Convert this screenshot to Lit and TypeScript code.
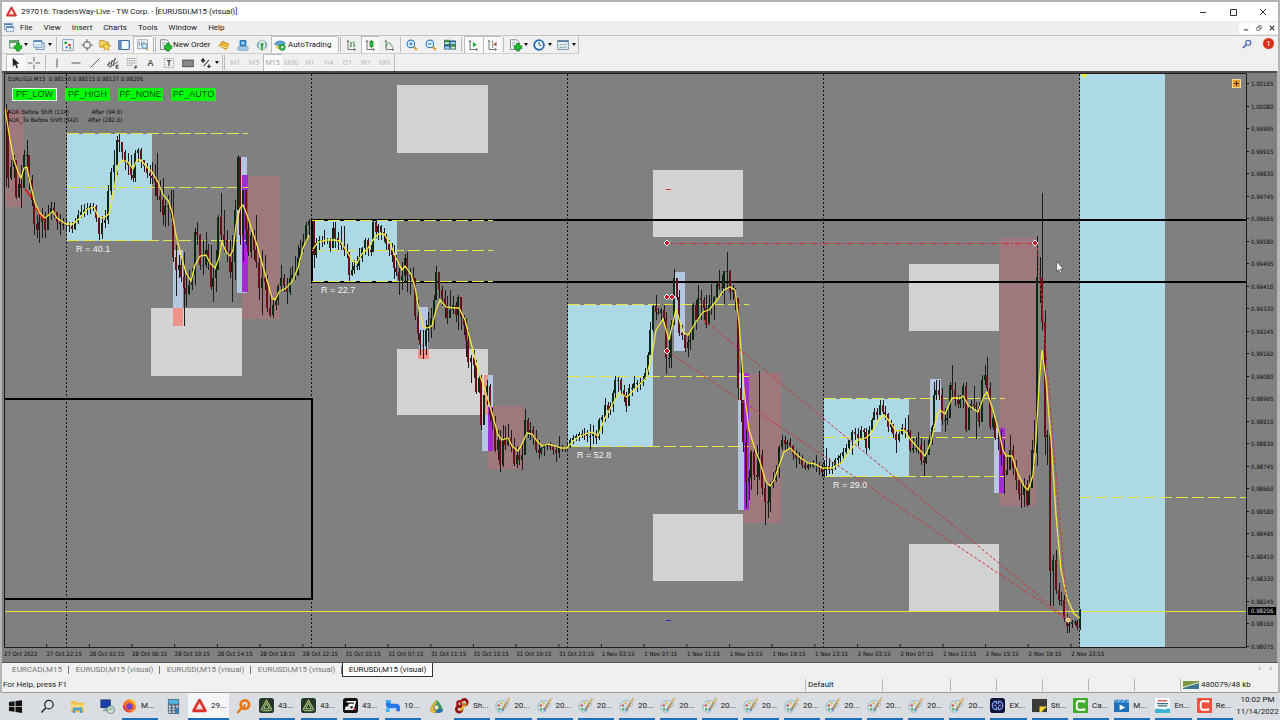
import { LitElement, html, css, svg } from "lit";
import { customElement, property, state } from "lit/decorators.js";
import { classMap } from "lit/directives/class-map.js";

/* Price series: x high close low, in chart units. Each bar opens at the previous close. */
const BARS = `
6 104 112 187;8 110 178 188;11 160 167 180;14 155 160 178;16 160 197 199;19 178 184 198;21 165 188 208;24 150 155 185;27 140 155 172;29 155 180 190;32 175 200 206;34 198 224 235;37 215 230 238;39 210 222 243;42 208 215 238;45 212 230 238;48 205 215 228;51 202 208 220;54 202 212 218;57 214 222 230;60 214 224 235;63 218 224 230;66 220 225 232;69 222 226 232;72 222 229 233;75 218 222 230;78 210 215 224;81 205 212 218;84 204 210 217;87 203 208 215;90 203 206 214;93 203 207 211;96 205 218 222;99 216 234 240;102 216 223 239;105 210 220 228;108 185 191 224;111 168 172 195;114 150 165 190;117 136 140 175;119 134 142 152;122 142 152 160;125 150 162 170;128 153 165 175;131 155 175 180;133 168 178 182;135 150 153 182;138 148 150 162;141 148 160 168;144 160 166 172;147 163 173 178;150 165 176 184;152 162 178 184;155 164 182 196;157 153 196 200;160 180 200 212;163 178 215 225;165 200 206 227;168 195 206 226;171 190 213 218;173 190 257 262;176 245 270 296;179 255 265 278;181 255 277 282;184 252 288 326;186 275 294 307;189 270 285 295;192 268 275 290;195 228 232 285;197 222 235 245;200 234 265 270;203 240 265 275;206 232 250 268;208 244 262 270;211 245 287 290;213 265 278 302;216 250 270 292;218 215 217 260;221 193 235 240;224 210 240 252;227 230 250 262;230 240 272 278;232 235 262 302;235 200 210 280;238 155 157 200;240 158 235 245;243 190 190 262;246 190 230 245;248 220 252 256;251 232 235 258;254 230 250 260;256 215 262 268;259 258 288 300;262 250 278 315;265 255 282 290;267 275 308 312;270 292 315 317;273 300 305 318;276 295 300 310;278 284 286 305;281 265 278 292;284 274 286 292;287 278 292 304;290 268 278 295;292 266 275 282;295 256 275 280;298 245 258 276;300 240 248 262;303 234 242 252;306 222 225 238;309 219 221 235;
314 248 255 268;316 238 243 258;319 236 240 250;322 236 241 247;324 230 240 245;327 238 240 244;330 238 248 252;333 222 228 248;335 222 238 248;338 232 242 250;341 226 245 250;344 226 250 256;347 244 252 258;349 252 275 281;352 262 270 276;354 260 266 274;357 256 266 270;359 248 258 270;362 247 248 262;365 238 240 255;368 238 250 256;371 245 252 256;373 220 222 250;376 220 232 238;378 224 226 240;381 225 232 240;384 228 235 242;386 234 244 250;389 240 250 256;392 243 255 262;394 245 268 279;396 255 272 276;399 268 280 295;402 262 276 290;405 254 258 282;407 252 275 292;410 268 276 295;413 267 278 285;415 278 316 320;418 300 333 340;420 330 345 355;423 330 346 359;426 320 330 355;428 312 325 342;431 308 318 338;434 295 300 330;436 266 272 300;439 272 290 298;442 286 298 306;445 290 305 318;447 296 318 324;450 290 310 318;453 296 305 314;456 302 315 322;458 295 297 330;461 297 317 330;464 315 325 335;466 318 340 357;468 330 362 368;471 355 358 383;474 350 365 378;476 360 392 394;479 375 378 393;481 375 425 430;484 395 395 425;487 380 386 405;490 384 415 422;492 408 420 430;495 416 450 452;498 430 440 460;500 430 465 472;503 425 440 467;505 426 445 450;508 424 438 446;511 430 447 452;514 438 464 466;517 446 455 468;519 450 460 465;522 442 455 470;525 409 420 455;528 418 432 438;530 422 430 440;533 426 437 445;536 430 450 453;539 440 453 459;541 447 448 455;544 444 446 456;547 443 445 450;550 442 447 450;553 444 450 455;556 446 453 462;559 436 448 458;562 445 449 452;565 447 448 452;567 442 447 452;
570 438 440 448;573 435 438 444;576 434 436 441;579 432 434 441;582 430 434 438;584 428 434 440;587 430 436 442;590 424 436 450;593 425 434 444;596 430 438 444;599 418 420 440;602 415 417 434;605 398 405 422;608 402 410 418;610 402 406 415;613 390 393 412;615 376 380 400;618 377 380 392;621 378 390 395;624 385 395 402;626 392 406 412;629 384 388 406;632 384 388 396;634 376 383 390;637 380 383 392;640 378 383 390;643 376 380 386;645 368 373 380;648 352 355 375;650 322 330 355;653 305 306 332;656 295 312 320;658 308 313 315;661 308 310 322;664 305 318 322;666 312 358 374;669 340 358 368;671 320 325 368;674 269 278 325;677 278 297 300;679 290 333 336;682 325 335 340;685 333 348 352;688 335 342 357;690 330 340 350;693 303 305 340;696 300 320 330;698 285 298 310;701 290 300 320;704 297 308 320;706 295 325 328;709 295 305 325;711 284 305 315;714 296 297 320;717 282 284 300;719 270 287 290;722 275 288 295;724 271 271 304;727 252 271 288;730 270 292 300;733 285 290 300;735 288 298 310;738 298 388 400;741 355 400 422;743 400 442 452;746 430 482 508;749 470 478 500;751 450 452 490;754 448 475 480;757 445 477 495;759 371 455 480;762 450 488 495;765 480 502 525;768 485 502 518;770 482 485 512;773 472 480 488;776 465 470 482;779 445 447 478;782 435 440 450;785 436 444 450;787 440 442 450;790 438 446 450;793 445 454 460;796 450 458 468;799 452 458 464;802 455 465 468;805 460 468 470;808 462 465 470;810 462 466 468;813 460 464 468;816 455 465 472;819 462 468 475;822 464 472 477;824 460 470 477;
826 448 466 476;829 458 470 474;832 462 467 474;835 458 460 470;838 455 458 466;840 453 456 464;843 448 452 460;846 444 448 455;849 440 440 450;852 430 432 455;855 428 434 440;858 428 438 446;861 426 430 440;864 428 432 440;866 428 448 454;869 426 430 450;872 418 420 432;874 408 412 420;877 408 415 420;880 400 405 412;883 400 412 416;885 406 414 420;888 413 427 432;891 420 424 432;893 424 434 438;896 430 440 453;899 430 434 442;902 424 428 435;905 418 430 438;908 415 432 436;910 430 450 452;913 438 448 453;916 437 448 452;918 432 445 454;921 438 460 465;924 440 463 476;926 450 455 464;929 436 440 455;932 425 427 445;934 382 395 430;936 380 390 400;939 380 395 400;942 388 420 425;945 408 420 432;947 410 418 425;950 382 385 410;952 365 390 398;955 382 400 406;958 395 404 408;960 395 400 408;963 383 386 408;966 382 430 432;969 405 408 430;971 400 404 410;974 386 406 410;976 402 407 439;979 402 422 427;982 375 380 422;985 365 375 385;987 357 388 392;990 382 427 430;993 410 418 430;995 418 438 440;998 428 438 450;1001 430 455 465;1004 440 475 494;1007 455 470 475;1010 435 450 470;1013 445 468 475;1016 460 480 490;1019 480 494 500;1021 480 495 508;1024 478 485 507;1027 480 505 507;1029 475 488 505;1032 440 450 488;1034 420 453 466;1037 236 277 466;1040 257 278 303;1042 193 322 330;1045 310 437 455;1047 430 435 465;1050 430 571 606;1053 555 560 606;1056 550 590 594;1059 583 600 605;1061 592 600 606;1064 595 618 622;1067 612 626 633;1069 617 624 633;1072 620 622 628;1075 620 622 625;1077 620 627 630;1080 609 611 630`;

const AVERAGE = [
  "5,108 10,140 14,160 18,172 21,178 24,168 27,167 30,182 35,203 40,213 45,218 50,214 53,211 57,218 66,224 73,224 80,218 87,209 94,207 98,216 103,218 109,214 113,195 118,165 122,160 128,162 133,169 137,160 141,160 145,165 152,172 158,182 163,195 168,200 172,212 176,235 181,255 186,273 191,281 195,265 200,256 206,255 210,263 215,268 219,258 222,242 226,252 230,256 233,250 236,225 240,208 243,205 247,215 252,230 257,245 262,263 267,280 272,298 275,300 279,292 286,288 292,282 298,268 303,248 309,235",
  "313,249 318,242 327,240 334,240 340,241 346,250 352,260 357,263 362,254 368,248 373,240 378,234 384,234 390,243 396,258 402,270 405,266 411,274 415,287 419,310 423,326 427,328 432,326 436,310 440,300 446,307 454,308 459,308 465,320 471,343 478,370 485,390 492,413 498,435 502,440 508,438 512,446 518,451 522,444 527,433 532,434 537,441 542,446 548,444 556,446 561,448 567,448 573,441 580,436 592,432 598,436 604,420 612,405 619,393 627,397 636,388 646,378 652,355 656,330 663,319 669,340 676,309 683,332 688,335 696,322 703,312 709,310 717,300 724,290 730,287 735,290 739,322 744,390 749,430 755,449 760,462 766,482 770,486 774,480 779,466 784,452 790,448 796,454 802,459 808,463 815,464 822,468 832,468 842,462 850,450 858,440 866,438 872,432 878,420 884,415 890,422 896,431 904,430 911,440 918,448 925,456 931,442 937,415 940,410 945,414 952,398 960,398 963,396 968,405 978,412 984,396 987,392 993,410 999,432 1003,450 1006,456 1012,456 1018,474 1024,486 1028,490 1033,475 1036,440 1039,385 1042,350 1046,380 1051,440 1056,515 1061,570 1067,598 1074,614 1080,618",
];

const PRICES = ["1.00165","1.00080","0.99995","0.99915","0.99830","0.99745","0.99665","0.99580","0.99495","0.99410","0.99330","0.99245","0.99160","0.99080","0.98995","0.98910","0.98830","0.98745","0.98660","0.98580","0.98495","0.98410","0.98330","0.98245","0.98160","0.98075"];
const TIMES = ["27 Oct 2022","27 Oct 22:15","28 Oct 02:15","28 Oct 06:15","28 Oct 10:15","28 Oct 14:15","28 Oct 18:15","28 Oct 22:15","31 Oct 03:15","31 Oct 07:15","31 Oct 11:15","31 Oct 15:15","31 Oct 19:15","31 Oct 23:15","1 Nov 03:15","1 Nov 07:15","1 Nov 11:15","1 Nov 15:15","1 Nov 19:15","1 Nov 23:15","2 Nov 03:15","2 Nov 07:15","2 Nov 11:15","2 Nov 15:15","2 Nov 19:15","2 Nov 23:15"];

/* x, y, width, height, class */
const ZONES: [number, number, number, number, string][] = [
  [397,85,91,68,"grey"],[151,308,91,68,"grey"],[397,349,91,66,"grey"],[653,170,90,67,"grey"],[653,514,90,67,"grey"],[909,264,90,67,"grey"],[909,544,90,67,"grey"],
  [67,134,85,107,"sky"],[312,221,85,61,"sky"],[568,305,85,142,"sky"],[824,399,85,78,"sky"],[1080,74,85,574,"sky"],
  [5,110,19,97,"pink"],[242,176,38,143,"pink"],[488,406,36,63,"pink"],[743,373,38,150,"pink"],[1000,238,36,268,"pink"],
  [173,250,10,58,"mist"],[173,308,10,18,"salmon"],[237,157,10,136,"mist"],[242,175,6,117,"violet"],
  [419,307,9,42,"mist"],[418,349,11,10,"salmon"],[482,415,6,36,"mist"],[488,375,5,32,"mist"],[484,375,4,40,"salmon"],[488,407,5,44,"violet"],
  [674,272,11,79,"mist"],[738,373,6,137,"mist"],[744,373,5,137,"violet"],[930,379,11,53,"mist"],[994,428,6,65,"mist"],[999,428,6,65,"violet"],
];
const LEVELS: [number, number, number][] = [
  [67,248,133],[67,248,187],[67,248,240],[312,493,220],[312,493,250],[312,493,281],
  [568,749,304],[568,749,376],[568,749,446],[824,1005,398],[824,1005,437],[824,1005,476],[1080,1247,497],
];
const HANDLES = [[667,243],[667,297],[672,297],[667,351],[1035,243]];
const RANGES: [number, number, string][] = [[76,252,"R = 40.1"],[321,293,"R = 22.7"],[577,458,"R = 52.8"],[833,488,"R = 29.0"]];

const axes = svg`<path d="M4 2v12h10M2.500 4L4 2l1.500 2M12 12.500l2 1.500-2 1.500" fill="none" stroke="#666" stroke-width="1.200"/>`;
const sheet = svg`<path d="M2 1h8l3 3v10H2z" fill="#f4f7fa" stroke="#667"/><path d="M4 5h5M4 8h4" stroke="#899"/>`;
const plus = svg`<path d="M10 6h4v3h3v4h-3v3h-4v-3H7V9h3z" fill="#1fbe2b" stroke="#0a7f18"/>`;
const lens = svg`<path d="M9.500 9.500l5 5" stroke="#d8a93b" stroke-width="3"/><circle cx="6.500" cy="6.500" r="5" fill="#dff0fc" stroke="#2f7fc6" stroke-width="1.500"/>`;
const tw = svg`<path d="M8 2.500L14.200 13.500H1.800z" fill="none" stroke="#d8332f" stroke-width="3.200" stroke-linejoin="round"/><path d="M8 5l3.600 6.800H4.400zM5.500 8.500l5 3.300" fill="none" stroke="#f3b0ac" stroke-width=".7"/>`;
const mt = svg`<rect width="16" height="16" rx="3" fill="#24392c"/><path d="M8 2.500l5.500 9.500-2 1.500h-7L2.500 12z" fill="none" stroke="#9fb46b" stroke-width="1.400"/><path d="M8 5.500l3 6H5z" fill="none" stroke="#c4d68c"/>`;

const ICONS: Record<string, unknown> = {
  tw,
  newchart: svg`<rect x="1" y="2" width="12" height="10" fill="#eef6ee" stroke="#3b7d47"/><path d="M1 4h12" stroke="#3b7d47" stroke-width="2"/>${plus}`,
  profiles: svg`<path d="M4 5h11v9H4z" fill="#dce8f6" stroke="#5480ae"/><path d="M1 2h11v9H1z" fill="#eef5fd" stroke="#5480ae"/><path d="M1 3h11" stroke="#5480ae" stroke-width="2"/><path d="M3 8h7" stroke="#91adc9"/>`,
  market: svg`<rect x="1" y="1" width="14" height="14" fill="#fbfcff" stroke="#5f83b4"/><circle cx="5" cy="5" r="2" fill="#2ba94a"/><circle cx="10" cy="8" r="2" fill="#d74c3c"/><circle cx="6" cy="11" r="1.500" fill="#3771c8"/><circle cx="11" cy="12" r="1.500" fill="#2ba94a"/>`,
  target: svg`<circle cx="8" cy="8" r="4.500" fill="none" stroke="#777" stroke-width="1.500"/><path d="M8 0v5M8 11v5M0 8h5M11 8h5" stroke="#777" stroke-width="1.500"/>`,
  star: svg`<path d="M1 2h6l1 2h5v7H1z" fill="#f4d264" stroke="#b48a25"/><path d="M10 5l1.600 3.300 3.700.4-2.700 2.500.7 3.700L10 13l-3.300 1.900.7-3.700L4.700 8.700l3.700-.4z" fill="#ffe24d" stroke="#b8861a"/>`,
  terminal: svg`<rect x="1" y="2" width="14" height="12" rx="1" fill="#f4f9ff" stroke="#39679d" stroke-width="1.500"/><path d="M1 2h4v12H1z" fill="#5f8fc6"/>`,
  tester: svg`<rect x="1" y="1" width="13" height="12" fill="#eef2f6" stroke="#8593a3"/><path d="M3 9V4M6 9V3M9 8V4" stroke="#5a6d80"/><circle cx="10" cy="9" r="3.500" fill="#cfe6f8" stroke="#3a78b5"/><path d="M12 12l3 3" stroke="#c79b3a" stroke-width="2"/>`,
  order: svg`${sheet}${plus}`,
  gold: svg`<path d="M1 9l5-6 9 4-4 7z" fill="#e9b53a" stroke="#a67a16"/><path d="M1 9l10 3 4-5" fill="none" stroke="#fff0b0"/>`,
  user: svg`<rect x="1" y="10" width="14" height="5" rx="2" fill="#a9c8e2" stroke="#6d97bc"/><path d="M4 9V2h8v7z" fill="#3b8bd0" stroke="#276aa7"/><path d="M6 4h4v3H6z" fill="#a8d8f4"/>`,
  signal: svg`<circle cx="8" cy="8" r="6.500" fill="#d8e6e4" stroke="#8fb4b3"/><path d="M4 12a6 6 0 010-8M12 12a6 6 0 000-8" fill="none" stroke="#6d9bb0" stroke-width="1.500"/><path d="M8 7v8" stroke="#35a443" stroke-width="2.500"/><circle cx="8" cy="7" r="2" fill="#35a443"/>`,
  auto: svg`<path d="M1 7c2-5 11-6 14-1l-7 4z" fill="#5da0d6" stroke="#2c6ea5"/><path d="M3 8l6 3v4L3 12z" fill="#f0c840"/><circle cx="11" cy="11" r="4.500" fill="#22a83a"/><path d="M9.800 8.800v4.400l3.500-2.200z" fill="#fff"/>`,
  bars: svg`${axes}<path d="M8 4v7M6.500 9H8M8 5h2M12 3v8M12 9h1.500" stroke="#2b7d38" fill="none" stroke-width="1.200"/>`,
  candles: svg`${axes}<path d="M10 1v12" stroke="#177a25"/><rect x="8" y="3" width="4" height="7" fill="#2bc13c" stroke="#177a25"/>`,
  line: svg`${axes}<path d="M4 11c2-7 5-7 6-4s3 3 4 4" fill="none" stroke="#2b8d38" stroke-width="1.200"/>`,
  zin: svg`${lens}<path d="M4 6.500h5M6.500 4v5" stroke="#2f7fc6" stroke-width="1.300"/>`,
  zout: svg`${lens}<path d="M4 6.500h5" stroke="#2f7fc6" stroke-width="1.300"/>`,
  tile: svg`<path d="M0 2h16v12H0z" fill="#2a5f96"/><path d="M1 4h6v3H1zM9 10h6v3H9z" fill="#bfe49a"/><path d="M9 4h6v3H9zM1 10h6v3H1z" fill="#a8d0f0"/><path d="M0 2h8M8 8h8" stroke="#3d9b3b" stroke-width="2"/>`,
  scroll: svg`${axes}<path d="M8 4v7l5-3.500z" fill="#22a836"/>`,
  shift: svg`${axes}<path d="M9 2v10" stroke="#555"/><path d="M14 4v6L10 7z" fill="#b5402f"/>`,
  indic: svg`${sheet}${plus}`,
  clock: svg`<circle cx="8" cy="8" r="6.500" fill="#e8f4ff" stroke="#2a6db6" stroke-width="2.500"/><path d="M8 4v4l3 1" fill="none" stroke="#2a5f96" stroke-width="1.300"/>`,
  template: svg`<rect x="1" y="2" width="14" height="12" fill="#e9f1f8" stroke="#5b7fa3"/><path d="M1 3h14" stroke="#5b7fa3" stroke-width="2"/><path d="M3 9l3-2 3 1 4-2M3 12l3-1 3 1 4-2" fill="none" stroke="#6d9080"/>`,
  arrowc: svg`<path d="M5 1v12l3-3 2 5 2-1-2-5h4z" fill="#222"/>`,
  cross: svg`<path d="M8 0v6M8 10v6M0 8h6M10 8h6" stroke="#555" stroke-width="1.200"/>`,
  vline: svg`<path d="M8 2v12" stroke="#555" stroke-width="1.300"/>`,
  hline: svg`<path d="M2 8h12" stroke="#555" stroke-width="1.300"/>`,
  trend: svg`<path d="M2 14L14 2" stroke="#555" stroke-width="1.300"/>`,
  channel: svg`<path d="M0 11L12 3M3 14l12-8M3 6l-1 7M7 4L5 13M11 1L8 12" stroke="#444" stroke-width="1.200"/><path d="M15.500 11H12v4h3.500M12 13h3" fill="none" stroke="#222"/>`,
  fibo: svg`<path d="M1 2h13M1 5h13M1 8h13M1 11h9" stroke="#777" stroke-dasharray="2 1"/><path d="M12 16v-4h3M12 14h2.500" fill="none" stroke="#222"/>`,
  label: svg`<rect x="2" y="2" width="12" height="12" fill="none" stroke="#777" stroke-dasharray="1.500 1.500"/><path d="M5 5h6M8 5v7" stroke="#333" stroke-width="1.500"/>`,
  rect: svg`<rect x="1" y="4" width="14" height="9" fill="#888" stroke="#333"/>`,
  arrows: svg`<path d="M1 5l3-4 3 4-3 3z" fill="#333"/><path d="M12 4L5 12" stroke="#333" stroke-width="1.500"/><path d="M9 12l3 3 3-3h-2v-2h-2v2z" fill="#333"/>`,
  search: svg`<path d="M1.500 14.500l5-5" stroke="#3b57b5" stroke-width="2.500"/><circle cx="10" cy="6" r="4" fill="#eef3ff" stroke="#3b57b5" stroke-width="1.800"/>`,
  win: svg`<path d="M1 3.300l6-.9v5.200H1zM8 2.200l7-1v6.400H8zM1 8.500h6v5.200l-6-.9zM8 8.500h7v6.400l-7-1z" fill="#111"/>`,
  find: svg`<circle cx="9.500" cy="6" r="4.500" fill="none" stroke="#222" stroke-width="1.300"/><path d="M6 9.500L1.500 14.500" stroke="#222" stroke-width="1.500"/>`,
  folder: svg`<path d="M1 2h5l2 2h7v10H1z" fill="#f2c14b"/><path d="M1 6h14v5H1z" fill="#fbdc7c"/><path d="M3 9h10v6h-2.500v-3h-5v3H3z" fill="#4a9bd1"/>`,
  remote: svg`<rect x="1" y="1" width="10" height="8" fill="#1c3fae" stroke="#27336b"/><path d="M4 10h6v3H3z" fill="#8aa"/><circle cx="11.500" cy="11.500" r="4" fill="#d7e3da" stroke="#6d8c7d"/><path d="M9.500 12l2-2 2 2" fill="none" stroke="#3a8a4a"/>`,
  firefox: svg`<circle cx="8" cy="8.500" r="7" fill="#ff7a1c"/><path d="M8 1c5 0 8 4 7 8-1-2-3-3-4-5-1 0-3-1-3-3z" fill="#ffc93a"/><path d="M1 8a7 7 0 0010 6.500C6 15 3 12 3 8z" fill="#e3265d"/><circle cx="8" cy="9" r="3.500" fill="#7b3fc4"/>`,
  calc: svg`<rect x="2" y="0" width="12" height="16" fill="#5b6f80"/><rect x="3" y="1" width="10" height="4" fill="#4fb8e8"/><path d="M3 7h2v2H3zM7 7h2v2H7zM11 7h2v2h-2zM3 10h2v2H3zM7 10h2v2H7zM3 13h2v2H3zM7 13h2v2H7z" fill="#dfe8ee"/><path d="M11 10h2v5h-2z" fill="#2f86c5"/>`,
  tool: svg`<circle cx="9.500" cy="6" r="4.500" fill="none" stroke="#e67817" stroke-width="3"/><path d="M6 9.500L1.500 15M10 6L7 10" stroke="#e67817" stroke-width="2.500"/>`,
  mt,
  sierra: svg`<rect width="16" height="16" rx="3" fill="#111"/><path d="M4 4h9l-1 3H7l-.5 1H12l-1.500 4H3l.7-2H8" fill="none" stroke="#fff" stroke-width="1.700"/><path d="M11 12h3" stroke="#e33" stroke-width="1.500"/>`,
  blue: svg`<path d="M1 2h5v4h6c3 0 4 2 4 4v4h-4v-3H5C2 11 1 9 1 7z" fill="#2577ee"/><path d="M1 11h4v4H1zM1 2h5v3H1z" fill="#35b7f5"/>`,
  mt5: svg`<path d="M8 1c3 2 6 7 7 11-2 4-12 4-14 0C2 8 5 3 8 1z" fill="#3c9a65"/><path d="M8 1C5 3 2 8 1 12c2 3 4 3 6 3z" fill="#e5b53c"/><path d="M9 9l6 3c-1 3-5 3-8 3z" fill="#2b72b8"/><circle cx="8" cy="9" r="2.800" fill="#f6f3c2" stroke="#32705b"/>`,
  share: svg`<g fill="none"><circle cx="11" cy="4.500" r="3" stroke="#8f1515" stroke-width="3"/><circle cx="6" cy="6" r="2.500" stroke="#a01818" stroke-width="2.500"/><circle cx="5.500" cy="12" r="3" stroke="#8f1515" stroke-width="3"/><path d="M13 5C12 9 9 12 7 14M8 4c3 2 2 6-2 9" stroke="#f4c02f" stroke-width="1.300"/></g>`,
  paint: svg`<path d="M1 9C1 4 6 2 10 3s5 3 4 5-3 1-4 3 0 4-4 4-5-3-5-6z" fill="#cfe3ea" stroke="#8fb0bd"/><circle cx="4" cy="8" r="1.300" fill="#d9534b"/><circle cx="7" cy="5.500" r="1.300" fill="#eab84b"/><circle cx="4.500" cy="12" r="1.300" fill="#4fae5b"/><circle cx="8" cy="12.500" r="1.200" fill="#3a7fd0"/><path d="M15 1L8 12" stroke="#b98a4e" stroke-width="2"/><path d="M15.500 0L12 5" stroke="#d8bd8e" stroke-width="2.500"/>`,
  exness: svg`<rect width="16" height="16" rx="3" fill="#0e1233"/><path d="M7 3.500a4.500 4.500 0 000 9M9 3.500a4.500 4.500 0 010 9M4.500 8H7M9 8h2.500M7 3.500v3M9 9.500v3M7 9.500v3M9 3.500v3" fill="none" stroke="#7f9bf0" stroke-width="1.500"/>`,
  sticky: svg`<path d="M0 1h16v14H0z" fill="#3a3a3a"/><path d="M8 9h8l-6 6H8z" fill="#fbd436"/>`,
  camt: svg`<rect width="16" height="16" rx="1" fill="#3fae2a"/><path d="M12 5V3.500H6a2 2 0 00-2 2v5a2 2 0 002 2h6V11" fill="none" stroke="#fff" stroke-width="2"/>`,
  movies: svg`<path d="M0 2h16v13H0z" fill="#1d6fb8"/><path d="M0 2h16v3H0z" fill="#63b3ec"/><path d="M1 5l3-3M6 5l3-3M11 5l3-3" stroke="#14497c"/><path d="M6 7v6l6-3z" fill="#fff"/>`,
  envelopes: svg`<path d="M0 0h16v16H0z" fill="#f8fbfc"/><path d="M3 3h10" stroke="#d55" stroke-width="1.500"/><path d="M2 6h12M3 8.500h10" stroke="#36707c" stroke-width="1.300"/><path d="M0 12c5-2 9 2 16-1v5H0z" fill="#3bb3cf"/>`,
  rec: svg`<rect width="16" height="16" rx="1" fill="#f0503c"/><path d="M12 5V3.500H6a2 2 0 00-2 2v5a2 2 0 002 2h6V11" fill="none" stroke="#fff" stroke-width="2"/>`,
  chartwin: svg`<rect x="1" y="1" width="12" height="9" fill="#d7e7f6" stroke="#4e80b6"/><rect x="4" y="6" width="11" height="8" fill="#f3f8fd" stroke="#4e80b6"/><path d="M1 2h12M4 7h11" stroke="#4e80b6" stroke-width="2"/>`,
};

@customElement("ui-icon")
class UiIcon extends LitElement {
  @property() name = "";
  static styles = css`
    :host { display: inline-flex; flex: none; width: 12px; height: 12px; }
    svg { width: 100%; height: 100%; overflow: visible; }
  `;
  render() {
    return html`<svg viewBox="0 0 16 16" aria-hidden="true">${ICONS[this.name]}</svg>`;
  }
}

@customElement("price-chart")
class PriceChart extends LitElement {
  @state() private mode = "PF_LOW";

  static styles = css`
    :host { display: grid; grid-template-columns: minmax(0, 1fr) 30px; grid-template-rows: minmax(0, 1fr) 14px; background: #808080; border-top: 2px solid #4b4b4b; padding-left: 2px; box-sizing: border-box; font: 6px/8px "DejaVu Sans Condensed", "DejaVu Sans", sans-serif; color: #0a0a0a; }
    .plot { position: relative; min-height: 0; overflow: hidden; }
    .plot svg.canvas { position: absolute; inset: 0; width: 100%; height: 100%; display: block; }
    .prices { display: flex; flex-direction: column; justify-content: space-between; padding-top: 7px; margin-bottom: -3px; position: relative; }
    .prices span::before { content: ""; display: inline-block; width: 2px; height: 1px; background: #111; vertical-align: 2px; margin-right: 2px; }
    .now { position: absolute; left: 1px; right: 1px; top: 534px; background: #000; color: #ddd; padding-left: 3px; }
    .times { display: grid; grid-template-columns: repeat(29, minmax(0, 1fr)); margin-right: 5px; padding-top: 2px; }
    .times span { white-space: nowrap; }
    .overlay { position: absolute; left: 4px; top: 2px; display: flex; flex-direction: column; }
    .ohlc { white-space: pre; }
    .modes { display: flex; gap: 8px; padding: 5px 4px 7px; }
    .modes button { width: 45px; height: 13px; padding: 0; border: 1px solid #14f014; background: #00ff08; color: #045004; font: 9px/11px "Liberation Sans", Arial, sans-serif; }
    .modes button.on { border-color: #e8ffe8; }
    .adr { display: grid; grid-template-columns: 80px auto; white-space: nowrap; }
    .trade { position: absolute; right: 6px; top: 6px; width: 9px; height: 9px; padding: 0; border: 1px solid #f6d596; background: #ef9c1c; display: grid; place-items: center; }
    .trade svg { width: 5px; height: 5px; }
    .grey { fill: #d3d3d3; } .sky { fill: #add8e6; } .pink { fill: #9f787e; } .mist { fill: #b4c6e0; } .salmon { fill: #ee9488; } .violet { fill: #a22bd2; }
    .day { stroke: #111; stroke-dasharray: 2 2; }
    .level { stroke: #e6e64a; stroke-dasharray: 12 4; }
    .solid { stroke: #000; stroke-width: 2; fill: none; }
    .bid { stroke: #e2e23a; }
    .wick { stroke: #1b1b1b; fill: none; }
    .up { stroke: #0b2a12; stroke-width: 2; fill: none; }
    .down { stroke: #6a0f18; stroke-width: 2; fill: none; }
    .avg { stroke: #f2e83c; fill: none; stroke-width: 1.300; }
    .signal { stroke: #e01818; fill: none; stroke-width: 2; }
    .link { stroke: #cf3038; fill: none; stroke-dasharray: 3 2; }
    .long { stroke-dasharray: 6 2 2 2; }
    .knob { fill: #d01020; stroke: #fff; }
    .range { fill: #f2f2f2; font: 9px "Liberation Sans", Arial, sans-serif; }
  `;

  private bars() {
    let wick = "", up = "", down = "";
    let open = 108;
    for (const row of BARS.trim().split(";")) {
      const [x, hi, close, lo] = row.trim().split(" ").map(Number);
      if (!x) continue;
      wick += `M${x + 0.5} ${hi}V${lo}`;
      const seg = `M${x} ${Math.min(open, close)}V${Math.max(open, close, Math.min(open, close) + 1)}`;
      if (close <= open) up += seg; else down += seg;
      open = close;
    }
    return svg`<path class="wick" d=${wick}/><path class="up" d=${up}/><path class="down" d=${down}/>`;
  }

  render() {
    const ticks = TIMES.map((_, i) => `M${(4 + i * 42.68).toFixed(1)} 644v3`).join("");
    return html`
      <div class="plot">
        <svg class="canvas" viewBox="4 73 1243 575" preserveAspectRatio="xMinYMin meet" role="img" aria-label="EURUSDi M15 price chart">
          ${ZONES.map(([x, y, w, h, c]) => svg`<rect class=${c} x=${x} y=${y} width=${w} height=${h}/>`)}
          ${[66.5, 311.5, 567.5, 823.5, 1079.5].map((x) => svg`<path class="day" d="M${x} 74V647"/>`)}
          <path class="solid" d="M4 399H312V599H4M312 220H1247M312 282H1247M312 220V282"/>
          ${LEVELS.map(([a, b, y]) => svg`<path class="level" d="M${a} ${y + 0.5}H${b}"/>`)}
          <path class="bid" d="M4 611.500H1247"/>
          ${this.bars()}
          <path class="signal" d="M25 189L31 197M36 208L44 220"/>
          ${AVERAGE.map((p) => svg`<polyline class="avg" points=${p}/>`)}
          <path class="link long" d="M667 243.500H1035"/>
          <path class="link" d="M704 320L1068 620M667 351L1068 620M1037 243L1068 620"/>
          <path d="M666 189.500h5" stroke="#e03030"/><path d="M666 620.500h5" stroke="#2828c8"/>
          ${HANDLES.map(([x, y]) => svg`<path class="knob" d="M${x} ${y - 3}l3 3-3 3-3-3z"/>`)}
          <circle cx="1068" cy="620" r="2" fill="#f7b04a" stroke="#fce3bc"/>
          <path d="M1081 74h6l-3 4z" fill="#f2f200"/>
          ${RANGES.map(([x, y, t]) => svg`<text class="range" x=${x} y=${y}>${t}</text>`)}
          <path d="M1056.500 261.500v10l2.300-2 1.600 3.500 1.500-.7-1.500-3.300h3z" fill="#fff" stroke="#333" stroke-width=".6"/>
          <path d="M4.500 647.500V73.500H1246.500V647.500z${ticks}" fill="none" stroke="#1c1c1c"/>
        </svg>
        <div class="overlay">
          <span class="ohlc">EURUSDi,M15  0.98150 0.98215 0.98137 0.98206</span>
          <div class="modes">
            ${["PF_LOW", "PF_HIGH", "PF_NONE", "PF_AUTO"].map((m) => html`<button class=${classMap({ on: this.mode === m })} @click=${() => (this.mode = m)}>${m}</button>`)}
          </div>
          <div class="adr"><span>ADR Before Shift (114)</span><span>&nbsp; After (94.0)</span><span>ADR_3x Before Shift (342)</span><span>After (282.0)</span></div>
        </div>
        <button class="trade" aria-label="Open trade panel"><svg viewBox="0 0 5 5"><path d="M0 2.500h5M2.500 0v5" stroke="#402000"/></svg></button>
      </div>
      <div class="prices">${PRICES.map((p) => html`<span>${p}</span>`)}<div class="now">0.98206</div></div>
      <div class="times">${TIMES.map((t) => html`<span>${t}</span>`)}</div>
    `;
  }
}

const tool = (icon: string, label: string, on = false) =>
  html`<button class="tool ${on ? "on" : ""}" aria-label=${label}><ui-icon name=${icon}></ui-icon></button>`;
const drop = (icon: string, label: string) =>
  html`<button class="tool drop" aria-label=${label}><ui-icon name=${icon}></ui-icon><i class="caret"></i></button>`;

@customElement("app-root")
class AppRoot extends LitElement {
  @state() private frame = "M15";
  @state() private tab = 4;

  static styles = css`
    :host { display: flex; flex-direction: column; min-height: 100vh; background: #b4b4b4; font: 8px/12px Roboto, "Open Sans", sans-serif; color: #1a1a1a; }
    * { box-sizing: border-box; }
    button { font: inherit; color: inherit; background: none; border: 0; padding: 0; margin: 0; white-space: nowrap; }
    .window { flex: 1; display: flex; flex-direction: column; padding: 2px 2px 0 2px; min-height: 0; }
    .title { display: flex; align-items: center; height: 19px; background: #fff; padding-left: 4px; gap: 4px; }
    .title .name { flex: 1; }
    .title ui-icon { width: 11px; height: 11px; }
    .caption { width: 30px; height: 19px; display: grid; place-items: center; }
    .caption svg { width: 8px; height: 8px; }
    .menu { display: flex; align-items: center; height: 14px; background: #efefef; padding-left: 2px; }
    .menu ui-icon { width: 10px; height: 10px; margin-right: 6px; }
    .menu nav { display: flex; gap: 11px; flex: 1; }
    .mdi { width: 13px; height: 11px; background: #fff; display: grid; place-items: center; }
    .mdi svg { width: 6px; height: 6px; }
    .bars { background: #f0f0f0; border-top: 1px solid #c4c4c4; height: 36px; display: flex; justify-content: space-between; }
    .row { display: flex; height: 18px; width: max-content; border-right: 1px solid #c0c0c0; border-bottom: 1px solid #cfcfcf; padding-left: 4px; align-items: stretch; }
    .group { display: flex; }
    .group > * { flex: 1; }
    .g2 { width: 37px; } .g3 { width: 56px; } .g5 { width: 93px; } .g8 { width: 149px; } .g9 { width: 168px; }
    .tool { display: flex; align-items: center; justify-content: center; height: 17px; min-width: 15px; }
    .drop { width: 24px; flex: none; gap: 3px; }
    .on { background: #fafafa; box-shadow: inset 1px 1px #bdbdbd; }
    .caret { border: 2px solid transparent; border-top: 3px solid #111; border-bottom: 0; }
    .sep { width: 1px; background: #bdbdbd; margin: 1px 2px; }
    .grip { width: 3px; margin: 1px 1px; border-left: 1px solid #bbb; border-right: 1px solid #bbb; }
    .wide { display: flex; align-items: center; gap: 2px; height: 17px; width: 58px; padding-left: 2px; }
    .wide.on { width: 66px; padding-left: 3px; }
    .frames { color: #b4b4b4; font: 7px/12px "Open Sans", sans-serif; }
    .frames .on { color: #999; }
    .letter { font: bold 9px/16px "Liberation Sans", sans-serif; color: #555; text-align: center; }
    .aside { display: flex; gap: 11px; padding: 2px 4px 0 0; }
    .aside ui-icon { width: 10px; height: 10px; margin-top: 1px; }
    .badge { width: 11px; height: 11px; border-radius: 6px; background: #d8301c; color: #fff; text-align: center; line-height: 11px; }
    price-chart { flex: 1; min-height: 0; margin-right: 1px; }
    .tabs { display: flex; height: 16px; background: #f0f0f0; border-top: 1px solid #555; color: #777; align-items: flex-start; }
    .tab { height: 14px; width: 91px; line-height: 14px; text-align: center; position: relative; }
    .tab:first-child { width: 67px; padding-left: 3px; }
    .tab:not(.cur)::after { content: ""; position: absolute; right: 0; top: 3px; height: 8px; width: 1px; background: #777; }
    .tab.cur { background: #fff; color: #111; border: 1px solid #333; border-top: 0; }
    .nav { margin-left: auto; display: flex; gap: 9px; padding-right: 6px; }
    .status { display: flex; height: 15px; align-items: center; background: #f0f0f0; border-bottom: 1px solid #999; }
    .status span { border-left: 1px solid #b5b5b5; height: 12px; padding-left: 2px; width: 46px; display: flex; align-items: center; gap: 2px; white-space: nowrap; }
    .status span:first-child { flex: 1; border: 0; padding-left: 1px; }
    .status .prof { width: 77px; } .status .w68 { width: 68px; } .status .traffic { width: 98px; }
    .traffic svg { width: 16px; height: 8px; }
    .task { display: flex; height: 27px; background: #dadde2; }
    .task ui-icon { width: 15px; height: 15px; }
    .pin { width: 30px; display: grid; place-items: center; }
    .slim { width: 28px; }
    .app { display: flex; align-items: center; gap: 4px; width: 36px; height: 27px; border-bottom: 2px solid #1f70b8; overflow: hidden; }
    .app.active { background: #f4f5f7; width: 41px; padding-left: 4px; }
    .quad { display: flex; gap: 6px; margin-left: 2px; }
    .solo { margin-left: 2px; }
    .apps { flex: 1; display: grid; grid-template-columns: repeat(19, minmax(0, 1fr)); gap: 5px; margin-left: 3px; }
    .apps .app { width: auto; }
    .clock { width: 47px; text-align: center; padding: 1px 0 0 2px; }
  `;

  private app(icon: string, text: string) {
    return html`<button class="app"><ui-icon name=${icon}></ui-icon>${text}</button>`;
  }

  render() {
    const tabs = ["EURCADi,M15", "EURUSDi,M15 (visual)", "EURUSDi,M15 (visual)", "EURUSDi,M15 (visual)", "EURUSDi,M15 (visual)"];
    return html`
      <div class="window">
        <header class="title">
          <ui-icon name="tw"></ui-icon><span class="name">297016: TradersWay-Live - TW Corp. - [EURUSDi,M15 (visual)]</span>
          <div class="group">
            <button class="caption" aria-label="Minimize"><svg viewBox="0 0 8 8"><path d="M1 4.500h6" stroke="#333"/></svg></button>
            <button class="caption" aria-label="Maximize"><svg viewBox="0 0 8 8"><path d="M1.500 1.500h6v6h-6z" fill="none" stroke="#333"/></svg></button>
            <button class="caption" aria-label="Close"><svg viewBox="0 0 8 8"><path d="M1 1l6 6M7 1L1 7" stroke="#333"/></svg></button>
          </div>
        </header>
        <div class="menu">
          <ui-icon name="chartwin"></ui-icon>
          <nav>${["File", "View", "Insert", "Charts", "Tools", "Window", "Help"].map((m) => html`<button>${m}</button>`)}</nav>
          <button class="mdi" aria-label="Minimize chart"><svg viewBox="0 0 8 8"><path d="M1 6.500h6" stroke="#444" stroke-width="1.500"/></svg></button>
          <button class="mdi" aria-label="Restore chart"><svg viewBox="0 0 8 8"><path d="M3 3V1h4v4H5M1 3h4v4H1z" fill="none" stroke="#555"/></svg></button>
          <button class="mdi" aria-label="Close chart"><svg viewBox="0 0 8 8"><path d="M1 1l6 6M7 1L1 7" stroke="#444" stroke-width="1.500"/></svg></button>
        </div>
        <div class="bars">
          <div>
            <div class="row">
              ${drop("newchart", "New chart")}${drop("profiles", "Profiles")}<i class="sep"></i>
              <div class="group g5">${tool("market", "Market watch")}${tool("target", "Data window")}${tool("star", "Navigator")}${tool("terminal", "Terminal")}${tool("tester", "Strategy tester", true)}</div>
              <i class="grip"></i>
              <button class="wide"><ui-icon name="order"></ui-icon>New Order</button>
              <div class="group g3">${tool("gold", "MetaEditor")}${tool("user", "Account")}${tool("signal", "Signals")}</div>
              <button class="wide on"><ui-icon name="auto"></ui-icon>AutoTrading</button>
              <i class="grip"></i>
              <div class="group g3">${tool("bars", "Bar chart")}${tool("candles", "Candlesticks", true)}${tool("line", "Line chart")}</div><i class="sep"></i>
              <div class="group g3">${tool("zin", "Zoom in")}${tool("zout", "Zoom out")}${tool("tile", "Tile windows")}</div><i class="sep"></i>
              <div class="group g2">${tool("scroll", "Auto scroll", true)}${tool("shift", "Chart shift", true)}</div><i class="sep"></i>
              ${drop("indic", "Indicators")}${drop("clock", "Periods")}${drop("template", "Templates")}
            </div>
            <div class="row">
              <div class="group g2">${tool("arrowc", "Cursor", true)}${tool("cross", "Crosshair")}</div><i class="sep"></i>
              <div class="group g8">${tool("vline", "Vertical line")}${tool("hline", "Horizontal line")}${tool("trend", "Trendline")}${tool("channel", "Channel")}${tool("fibo", "Fibonacci")}<button class="letter" aria-label="Text">A</button>${tool("label", "Label")}${tool("rect", "Rectangle")}</div>
              ${drop("arrows", "Arrows")}<i class="grip"></i>
              <div class="group g9 frames">${["M1", "M5", "M15", "M30", "H1", "H4", "D1", "W1", "MN"].map((f) => html`<button class=${classMap({ on: this.frame === f })} @click=${() => (this.frame = f)}>${f}</button>`)}</div>
            </div>
          </div>
          <div class="aside"><ui-icon name="search"></ui-icon><span class="badge">1</span></div>
        </div>
        <price-chart></price-chart>
        <div class="tabs">
          ${tabs.map((t, i) => html`<button class="tab ${classMap({ cur: this.tab === i })}" @click=${() => (this.tab = i)}>${t}</button>`)}
          <div class="nav"><button aria-label="Previous tab">‹</button><button aria-label="Next tab">›</button></div>
        </div>
        <footer class="status">
          <span>For Help, press F1</span><span class="prof">Default</span><span class="w68"></span><span></span><span></span><span></span><span></span><span></span>
          <span class="traffic"><svg viewBox="0 0 16 8" aria-hidden="true"><path d="M0 0h16v8H0z" fill="#7f9a45"/><path d="M0 8h16V2L0 6z" fill="#3e7390"/><path d="M0 6.500L16 1.500" stroke="#e8efd0"/></svg>480079/48 kb</span>
        </footer>
      </div>
      <div class="task">
        <button class="pin" aria-label="Start"><ui-icon name="win"></ui-icon></button>
        <button class="pin solo" aria-label="Search"><ui-icon name="find"></ui-icon></button>
        <button class="pin" aria-label="Files"><ui-icon name="folder"></ui-icon></button>
        <button class="pin" aria-label="Remote desktop"><ui-icon name="remote"></ui-icon></button>
        ${this.app("firefox", "M...")}
        <button class="pin" aria-label="Calculator"><ui-icon name="calc"></ui-icon></button>
        <button class="app active"><ui-icon name="tw"></ui-icon>29...</button>
        <button class="pin slim" aria-label="Tool"><ui-icon name="tool"></ui-icon></button>
        <div class="quad">${this.app("mt", "43...")}${this.app("mt", "43...")}${this.app("sierra", "43...")}${this.app("blue", "10...")}</div>
        <button class="pin" aria-label="MetaTrader"><ui-icon name="mt5"></ui-icon></button>
        <div class="apps">
          ${this.app("share", "Sh...")}${Array.from({ length: 12 }, () => this.app("paint", "20..."))}
          ${this.app("exness", "EX...")}${this.app("sticky", "Sti...")}${this.app("camt", "Ca...")}${this.app("movies", "M...")}${this.app("envelopes", "En...")}${this.app("rec", "Re...")}
        </div>
        <div class="clock">10:02 PM<br>11/14/2022</div>
      </div>
    `;
  }
}
